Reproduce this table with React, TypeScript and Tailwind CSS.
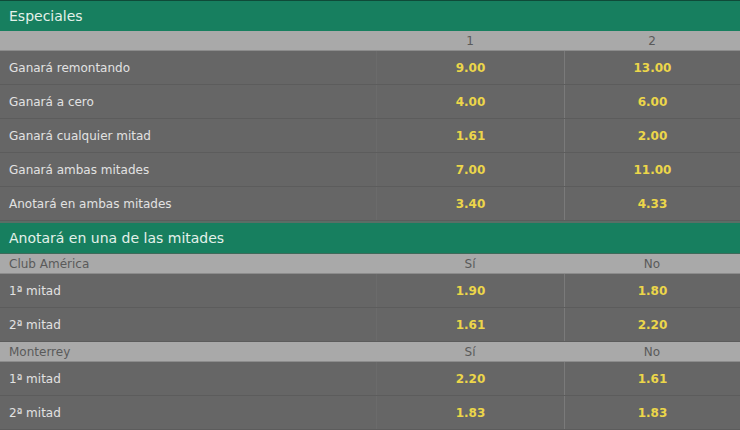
import clsx from 'clsx';

type Row = { label: string; a: string; b: string };

const especiales: Row[] = [
  { label: 'Ganará remontando', a: '9.00', b: '13.00' },
  { label: 'Ganará a cero', a: '4.00', b: '6.00' },
  { label: 'Ganará cualquier mitad', a: '1.61', b: '2.00' },
  { label: 'Ganará ambas mitades', a: '7.00', b: '11.00' },
  { label: 'Anotará en ambas mitades', a: '3.40', b: '4.33' },
];

const teams: { name: string; rows: Row[] }[] = [
  {
    name: 'Club América',
    rows: [
      { label: '1ª mitad', a: '1.90', b: '1.80' },
      { label: '2ª mitad', a: '1.61', b: '2.20' },
    ],
  },
  {
    name: 'Monterrey',
    rows: [
      { label: '1ª mitad', a: '2.20', b: '1.61' },
      { label: '2ª mitad', a: '1.83', b: '1.83' },
    ],
  },
];

const cols = 'grid grid-cols-[376px_188px_176px]';

function SectionTitle({ title, first }: { title: string; first?: boolean }) {
  return (
    <div
      className={clsx(
        'flex items-center bg-[#177f5f] px-[9px] text-[14px] text-[#e3f1ea]',
        first ? 'h-[31px] border-t border-[#0f4a38]' : 'h-[33px] border-t-2 border-[#5a6e66] border-b border-b-[#3e6a5a]',
      )}
    >
      {title}
    </div>
  );
}

function SubHeader({ label, a, b }: Row) {
  return (
    <div className={clsx(cols, 'h-[20px] items-center border-b border-[#8c8c8c] bg-[#a9a9a9] pt-px text-[12px] text-[#5a5a5a]')}>
      <div className="px-[9px]">{label}</div>
      <div className="text-center">{a}</div>
      <div className="text-center">{b}</div>
    </div>
  );
}

function OddsRow({ label, a, b }: Row) {
  return (
    <div className={clsx(cols, 'h-[34px] border-b border-[#5c5c5c] bg-[#666666] text-[12px]')}>
      <div className="flex items-center px-[9px] text-[#e2e2e2]">{label}</div>
      <div className="flex items-center justify-center border-l border-[#6b6b6b] font-bold text-[#ecd64a]">{a}</div>
      <div className="flex items-center justify-center border-l border-[#7a7a7a] font-bold text-[#ecd64a]">{b}</div>
    </div>
  );
}

export default function App() {
  return (
    <div className="h-[430px] w-[740px] overflow-hidden bg-[#666666] font-['DejaVu_Sans',Verdana,sans-serif]">
      <SectionTitle title="Especiales" first />
      <SubHeader label="" a="1" b="2" />
      {especiales.map((row) => (
        <OddsRow key={row.label} {...row} />
      ))}
      <SectionTitle title="Anotará en una de las mitades" />
      {teams.map((team) => (
        <div key={team.name}>
          <SubHeader label={team.name} a="Sí" b="No" />
          {team.rows.map((row) => (
            <OddsRow key={row.label} {...row} />
          ))}
        </div>
      ))}
    </div>
  );
}
